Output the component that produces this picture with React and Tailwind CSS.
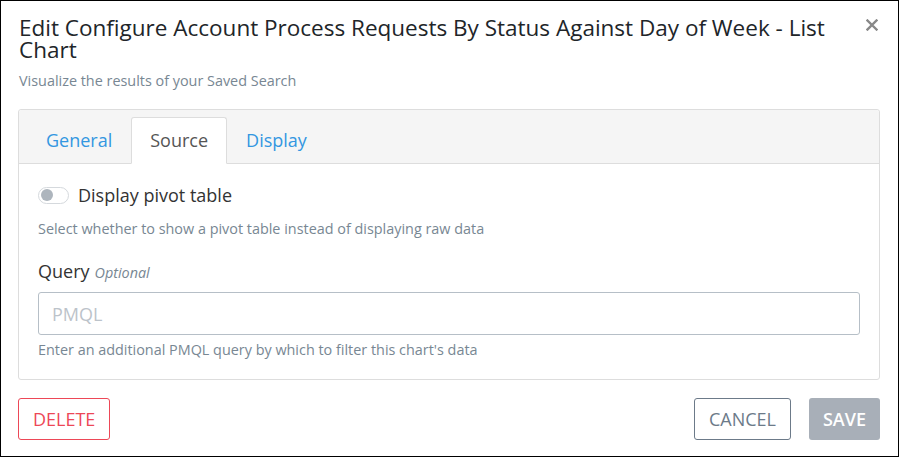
export default function App() {
  return (
    <div className="w-[899px] h-[457px] border border-black bg-white font-['Open_Sans',sans-serif] text-[#212529] flex flex-col">
      {/* header */}
      <div className="flex justify-between pl-[18px] pr-[20px] pt-[16px]">
        <h5 className="w-[830px] text-[22.5px] leading-[22px] font-normal">
          Edit Configure Account Process Requests By Status Against Day of Week - List Chart
        </h5>
        <button className="mt-[2px] w-[12px] h-[12px]" aria-label="Close">
          <svg viewBox="0 0 12 12" className="w-[12px] h-[12px]" stroke="#888" strokeWidth="2.4" strokeLinecap="square">
            <path d="M1.5 1.5l9 9M10.5 1.5l-9 9" />
          </svg>
        </button>
      </div>
      <p className="pl-[18px] mt-[10px] text-[14.4px] leading-[20px] text-[#788793]">Visualize the results of your Saved Search</p>

      {/* card */}
      <div className="ml-[17px] mr-[18px] mt-[18px] border border-[#ddd] rounded-[3px] h-[271px] flex flex-col">
        <div className="bg-[#f5f5f5] border-b border-[#ddd] h-[54px] px-[8px] flex items-end rounded-t-[3px]">
          <div className="flex -mb-px">
            <span className="px-[18px] h-[47px] flex items-center text-[18px] text-[#3397e1] border border-transparent">General</span>
            <span className="px-[18px] h-[47px] flex items-center text-[18px] text-[#555] bg-white border border-[#ddd] border-b-white rounded-t-[3px]">Source</span>
            <span className="px-[18px] h-[47px] flex items-center text-[18px] text-[#3397e1] border border-transparent">Display</span>
          </div>
        </div>
        <div className="px-[19px] pt-[19px] flex flex-col">
          <div className="flex items-center gap-[9px] h-[24px]">
            <span className="w-[31px] h-[17px] rounded-full border border-[#d5d9dd] bg-white flex items-center pl-[2px]">
              <span className="w-[12px] h-[12px] rounded-full bg-[#adb5bd]" />
            </span>
            <span className="text-[18px] leading-[24px] text-[#333]">Display pivot table</span>
          </div>
          <p className="mt-[12px] text-[14.4px] leading-[20px] text-[#788793]">Select whether to show a pivot table instead of displaying raw data</p>
          <div className="mt-[20px] flex items-baseline gap-[5px] h-[24px]">
            <span className="text-[18px] leading-[24px] text-[#333]">Query</span>
            <span className="text-[14.4px] italic text-[#788793]">Optional</span>
          </div>
          <input
            className="mt-[9px] h-[43px] w-full border border-[#b6bfc7] rounded-[3px] px-[13px] text-[18px] placeholder:text-[#bcc3ca] outline-none"
            placeholder="PMQL"
          />
          <p className="mt-[5px] text-[14.4px] leading-[20px] text-[#788793]">Enter an additional PMQL query by which to filter this chart's data</p>
        </div>
      </div>

      {/* footer */}
      <div className="ml-[17px] mr-[18px] mt-[18px] flex justify-between">
        <button className="h-[42px] px-[14px] border border-[#ed4757] rounded-[3px] text-[#ed4757] text-[18px]">DELETE</button>
        <div className="flex gap-[18px]">
          <button className="h-[42px] px-[14px] border border-[#6c7a89] rounded-[3px] text-[#6c7a89] text-[18px]">CANCEL</button>
          <button className="h-[42px] px-[14px] bg-[#a8afb8] rounded-[3px] text-white text-[18px] font-semibold">SAVE</button>
        </div>
      </div>
    </div>
  );
}
